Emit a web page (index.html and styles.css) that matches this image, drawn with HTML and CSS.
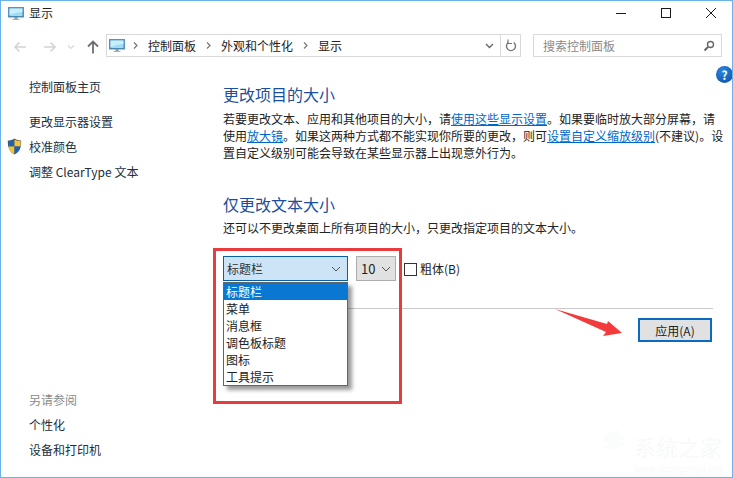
FILE: index.html
```html
<!DOCTYPE html>
<html lang="zh-CN">
<head>
<meta charset="utf-8">
<title>显示</title>
<link rel="stylesheet" href="styles.css">
</head>
<body>
<div class="window">
  <header class="titlebar">
    <svg class="monitor" width="16" height="13" viewBox="0 0 16 13"><rect x="0.5" y="0.5" width="15" height="9.5" fill="#3f7fa8" stroke="#5b93b8"/><rect x="1.5" y="1.5" width="13" height="7.5" fill="#9fdcf5"/><path d="M1.5 1.5h13v3.5q-7 0-13 3z" fill="#c9effc"/><rect x="6.5" y="10" width="3" height="2" fill="#8a9aa6"/><rect x="4.5" y="12" width="7" height="1" fill="#a5b2bb"/></svg>
    <span class="title">显示</span>
    <div class="winbtns">
      <svg width="12" height="12" viewBox="0 0 12 12"><path d="M1 6.500h10" stroke="#1a1a1a" fill="none"/></svg>
      <svg width="12" height="12" viewBox="0 0 12 12"><rect x="1.500" y="1.500" width="9" height="9" stroke="#1a1a1a" fill="none"/></svg>
      <svg width="12" height="12" viewBox="0 0 12 12"><path d="M1 1l10 10M11 1L1 11" stroke="#1a1a1a" fill="none"/></svg>
    </div>
  </header>
  <nav class="navrow">
    <div class="navbtns">
      <svg width="14" height="12" viewBox="0 0 14 12"><path d="M13 6H2M6.500 1.500L2 6l4.500 4.500" stroke="#d4d4d4" stroke-width="1.600" fill="none"/></svg>
      <svg width="14" height="12" viewBox="0 0 14 12"><path d="M1 6h11M7.500 1.500L12 6l-4.500 4.500" stroke="#d4d4d4" stroke-width="1.600" fill="none"/></svg>
      <svg width="8" height="6" viewBox="0 0 8 6"><path d="M1 1.500l3 3 3-3" stroke="#d8d8d8" stroke-width="1.200" fill="none"/></svg>
      <svg width="12" height="14" viewBox="0 0 12 14"><path d="M6 13.500V2M1 6.500L6 1.500l5 5" stroke="#6e6e6e" stroke-width="1.800" fill="none"/></svg>
    </div>
    <div class="address">
      <svg class="monitor" width="16" height="13" viewBox="0 0 16 13"><rect x="0.5" y="0.5" width="15" height="9.5" fill="#3f7fa8" stroke="#5b93b8"/><rect x="1.500" y="1.500" width="13" height="7.500" fill="#9fdcf5"/><path d="M1.500 1.500h13v3.500q-7 0-13 3z" fill="#c9effc"/><rect x="6.500" y="10" width="3" height="2" fill="#8a9aa6"/><rect x="4.500" y="12" width="7" height="1" fill="#a5b2bb"/></svg>
      <svg class="crumbsep first" width="5" height="7" viewBox="0 0 5 7"><path d="M1 .5l3 3-3 3" stroke="#777" stroke-width="1.200" fill="none"/></svg>
      <span>控制面板</span>
      <svg class="crumbsep" width="5" height="7" viewBox="0 0 5 7"><path d="M1 .5l3 3-3 3" stroke="#777" stroke-width="1.200" fill="none"/></svg>
      <span>外观和个性化</span>
      <svg class="crumbsep" width="5" height="7" viewBox="0 0 5 7"><path d="M1 .5l3 3-3 3" stroke="#777" stroke-width="1.200" fill="none"/></svg>
      <span>显示</span>
      <svg class="addr-drop" width="9" height="6" viewBox="0 0 9 6"><path d="M1 1l3.500 3.500L8 1" stroke="#666" stroke-width="1.400" fill="none"/></svg>
      <div class="refresh">
        <svg width="12" height="13" viewBox="0 0 12 13"><path d="M8.700 3.500A4.500 4.500 0 1 1 3.300 3.500" stroke="#777" stroke-width="1.400" fill="none"/><path d="M3 .5v4h4" stroke="#777" stroke-width="1.200" fill="none"/></svg>
      </div>
    </div>
    <div class="search">
      <span>搜索控制面板</span>
      <svg width="12" height="12" viewBox="0 0 12 12"><circle cx="7.500" cy="4.500" r="3" stroke="#666" stroke-width="1.400" fill="none"/><path d="M5 7l-3.500 3.500" stroke="#666" stroke-width="2" fill="none"/></svg>
    </div>
  </nav>
  <div class="content">
    <aside class="sidebar">
      <div class="side-top">
        <a class="side-home">控制面板主页</a>
        <a>更改显示器设置</a>
        <a class="with-shield"><svg class="shield" width="15" height="17" viewBox="0 0 15 17"><path d="M7.500 .5C5.500 2 3 2.500 .8 2.500c0 6 1 11 6.700 14 5.700-3 6.700-8 6.700-14C12 2.500 9.500 2 7.500 .5z" fill="#555"/><path d="M7.500 1.500v7h-6c-.2-1.800-.2-3.500-.2-5.300 2.300 0 4.400-.6 6.200-1.700z" fill="#1e62b4"/><path d="M7.500 1.500v7h6c.2-1.800.2-3.500.2-5.300-2.300 0-4.400-.6-6.200-1.700z" fill="#f3c33c"/><path d="M7.500 8.500h-6c.5 3 2 5.800 6 7.500z" fill="#f3c33c"/><path d="M7.500 8.500h6c-.5 3-2 5.800-6 7.500z" fill="#1e62b4"/></svg>校准颜色</a>
        <a>调整 ClearType 文本</a>
      </div>
      <div class="side-bottom">
        <span class="side-label">另请参阅</span>
        <a>个性化</a>
        <a>设备和打印机</a>
      </div>
    </aside>
    <main class="main">
      <div class="helpwrap"><span class="help">?</span></div>
      <h2>更改项目的大小</h2>
      <p>若要更改文本、应用和其他项目的大小，请<a>使用这些显示设置</a>。如果要临时放大部分屏幕，请<br>使用<a>放大镜</a>。如果这两种方式都不能实现你所要的更改，则可<a>设置自定义缩放级别</a>(不建议)。设<br>置自定义级别可能会导致在某些显示器上出现意外行为。</p>
      <h2 class="second">仅更改文本大小</h2>
      <p class="sub">还可以不更改桌面上所有项目的大小，只更改指定项目的文本大小。</p>
      <div class="controls">
        <div class="combo"><span>标题栏</span><svg width="10" height="6" viewBox="0 0 10 6"><path d="M1 1l4 4 4-4" stroke="#555" fill="none"/></svg></div>
        <div class="sizebox"><span>10</span><svg width="10" height="6" viewBox="0 0 10 6"><path d="M1 1l4 4 4-4" stroke="#555" fill="none"/></svg></div>
        <label class="bold"><span class="check"></span>粗体(B)</label>
      </div>
      <hr>
      <div class="actions"><button type="button">应用(A)</button></div>
    </main>
  </div>
  <ul class="dropdown">
    <li class="sel">标题栏</li>
    <li>菜单</li>
    <li>消息框</li>
    <li>调色板标题</li>
    <li>图标</li>
    <li>工具提示</li>
  </ul>
  <div class="redbox"></div>
  <svg class="arrow" width="70" height="32" viewBox="0 0 70 32"><path d="M0 1L52 16l1-3L67 25 48 28l3-4z" fill="#f33b3b"/></svg>
  <svg class="wm-logo" width="28" height="34" viewBox="0 0 28 34"><path d="M2 8L16 3l8 8-6 3 6 3-10 6-12-3 8-3-8-3z" fill="#fbfcfc"/></svg>
  <div class="watermark"><span class="wm-cn">系统之家</span><span class="wm-en">www.xitongzhijia.net</span></div>
</div>
</body>
</html>
```
FILE: styles.css
```css
* { box-sizing: border-box; }
html, body { margin: 0; padding: 0; background: #fff; }
body { font-family: "Noto Sans CJK SC", "Liberation Sans", sans-serif; font-size: 12px; color: #1f1f1f; }
.window { position: relative; width: 733px; height: 478px; border: 1px solid #6cb2ea; overflow: hidden; background: #fff; display: flex; flex-direction: column; }
svg { display: block; flex: none; }
.titlebar { height: 33px; display: flex; align-items: center; padding: 0 0 9px 7px; }
.title { margin-left: 5px; line-height: 16px; }
.winbtns { margin-left: auto; display: flex; gap: 33px; padding-right: 15px; align-items: center; }
.navrow { height: 23px; display: flex; align-items: stretch; }
.navbtns { width: 105px; display: flex; align-items: center; padding: 2px 0 0 12px; }
.navbtns svg:nth-child(2) { margin-left: 16px; }
.navbtns svg:nth-child(3) { margin-left: 10px; }
.navbtns svg:nth-child(4) { margin-left: 12px; }
.address { width: 415px; border: 1px solid #d9d9d9; display: flex; align-items: center; padding-left: 2px; color: #222; }
.address span { line-height: 16px; }
.crumbsep { margin: 0 10px; }
.crumbsep.first { margin: 0 10px 0 8px; }
.addr-drop { margin-left: auto; margin-right: 6px; }
.refresh { width: 20px; height: 100%; border-left: 1px solid #d9d9d9; display: flex; align-items: center; justify-content: center; }
.search { width: 189px; margin-left: 12px; border: 1px solid #d9d9d9; display: flex; align-items: center; justify-content: space-between; padding: 0 6px 0 9px; color: #8a8a8a; }
.content { flex: 1; display: flex; min-height: 0; }
.sidebar { width: 222px; padding: 17px 0 15px 28px; display: flex; flex-direction: column; justify-content: space-between; }
.sidebar a, .side-label { display: block; line-height: 25px; color: #222d3d; white-space: nowrap; }
.side-home { margin-bottom: 10px; }
.with-shield { position: relative; }
.shield { position: absolute; left: -22px; top: 4px; }
.side-label { color: #8a8a8a; }
.main { width: 500px; position: relative; padding-top: 27px; }
.helpwrap { position: absolute; right: -10px; top: 9px; }
.help { display: block; width: 17px; height: 17px; border-radius: 50%; background: radial-gradient(circle at 40% 30%, #2a86dc, #0a4ea5); color: #fff; font-weight: 700; font-size: 12px; line-height: 17px; text-align: center; }
h2 { margin: 0; font-size: 16px; font-weight: 400; line-height: 20px; color: #1b4f9c; }
h2.second { margin-top: 33px; }
p { margin: 6px 0 0; line-height: 17px; white-space: nowrap; color: #222; }
p.sub { margin-top: 5px; }
p a { color: #0066cc; text-decoration: underline; }
.controls { margin-top: 20px; display: flex; align-items: flex-start; }
.combo { width: 125px; height: 25px; border: 1px solid #0a5fa8; background: #cde4f7; display: flex; align-items: center; justify-content: space-between; padding: 0 6px 0 3px; color: #333; }
.sizebox { width: 40px; height: 25px; margin-left: 8px; border: 1px solid #adadad; background: #e1e1e1; display: flex; align-items: center; justify-content: space-between; padding: 0 4px; font-size: 13px; color: #222; }
.bold { display: flex; align-items: center; margin-left: 8px; height: 24px; color: #222; }
.check { width: 13px; height: 13px; border: 1px solid #333; background: #fff; margin-right: 3px; margin-top: 2px; }
hr { margin: 27px 10px 0 0; border: 0; border-top: 1px solid #c9c9c9; height: 1px; }
.actions { display: flex; justify-content: flex-end; padding: 9px 11px 0 0; }
button { width: 74px; height: 24px; border: 2px solid #0a6bc0; background: #e1e1e1; font: inherit; color: #222; padding: 0; }
.dropdown { position: absolute; left: 222px; top: 281px; width: 125px; height: 104px; margin: 0; padding: 0; list-style: none; background: #fff; border: 1px solid #646464; box-shadow: 4px 4px 4px rgba(0,0,0,.4); }
.dropdown li { height: 17px; line-height: 17px; padding-left: 2px; color: #222; }
.dropdown li.sel { background: #0a78d2; color: #fff; }
.redbox { position: absolute; left: 212px; top: 247px; width: 189px; height: 156px; border: 3px solid #e93a3e; pointer-events: none; }
.arrow { position: absolute; left: 554px; top: 307px; }
.wm-logo { position: absolute; left: 600px; top: 426px; }
.watermark { position: absolute; left: 633px; top: 429px; width: 92px; display: flex; flex-direction: column; color: #f8f9fa; white-space: nowrap; }
.wm-cn { font-size: 22px; line-height: 32px; }
.wm-en { font-size: 9px; line-height: 13px; }
```
